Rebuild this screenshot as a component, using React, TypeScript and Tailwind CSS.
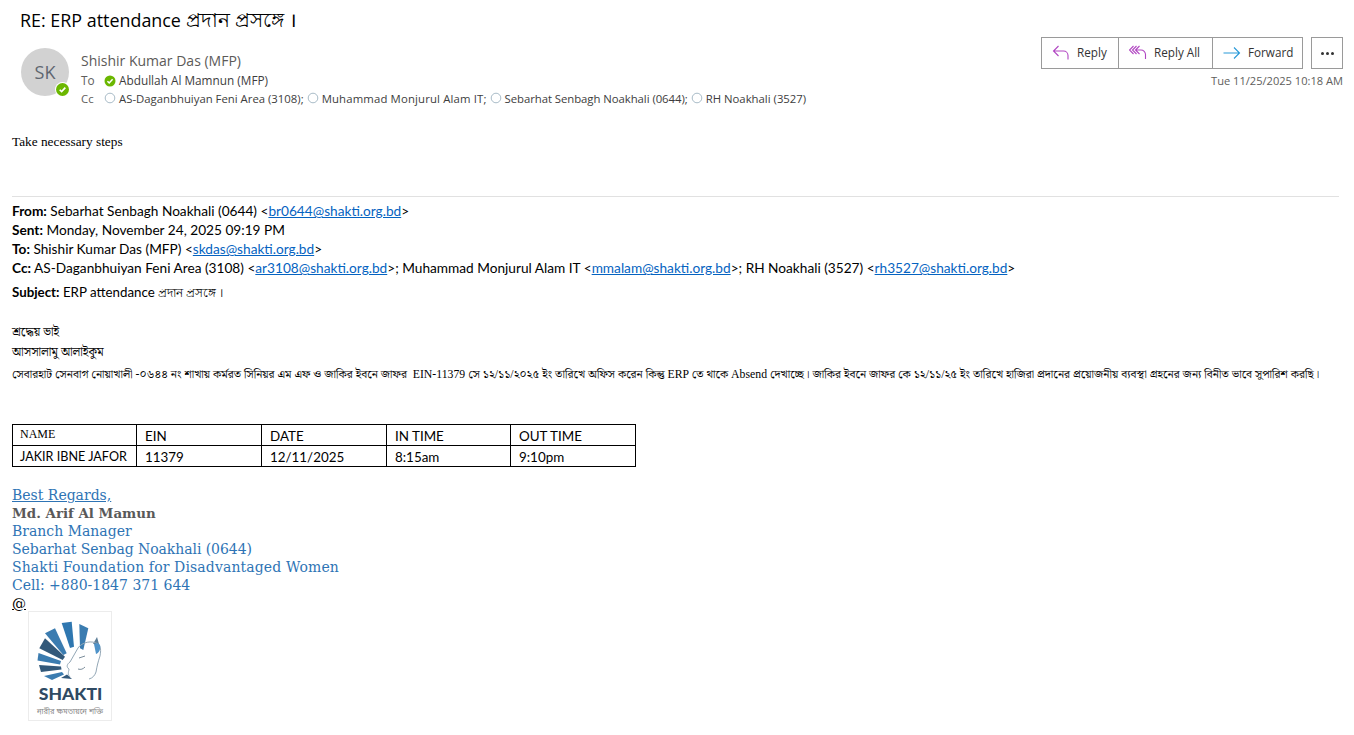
import React from "react";

const sans = "font-['Open_Sans','Noto_Sans',sans-serif]";
const body = "font-['Lato','Open_Sans',sans-serif]";
const serif = "font-['Liberation_Serif','Noto_Serif_Bengali','Noto_Sans_Bengali',serif]";

const Presence = ({ on }: { on?: boolean }) =>
  on ? (
    <svg width="12" height="12" viewBox="0 0 12 12" className="shrink-0">
      <circle cx="6" cy="6" r="5.5" fill="#6bb700" />
      <path d="M3.4 6.2l1.8 1.7 3.4-3.6" fill="none" stroke="#fff" strokeWidth="1.5" />
    </svg>
  ) : (
    <svg width="12" height="12" viewBox="0 0 12 12" className="shrink-0">
      <circle cx="6" cy="6" r="4.8" fill="none" stroke="#a9bcc8" strokeWidth="1" />
    </svg>
  );

const ReplyIcon = () => (
  <svg width="18" height="18" viewBox="0 0 18 18" fill="none" stroke="#b146c2" strokeWidth="1.1">
    <path d="M6.5 2.5L1.5 7.5l5 5M1.5 7.5h10a4.5 4.5 0 0 1 4.5 4.5v4" transform="translate(0 -.5)" />
  </svg>
);

const ReplyAllIcon = () => (
  <svg width="18" height="18" viewBox="0 0 18 18" fill="none" stroke="#b146c2" strokeWidth="1.1">
    <path d="M4.5 2L.5 6l4 4M7.5 2L3.5 6l4 4M10.5 2L6.5 6l4 4M6.5 6h5.5a4.5 4.5 0 0 1 4.5 4.5V15" />
  </svg>
);

const ForwardIcon = () => (
  <svg width="18" height="18" viewBox="0 0 18 18" fill="none" stroke="#2899d8" strokeWidth="1.1">
    <path d="M.5 9h16M11 3.5L16.5 9 11 14.5" />
  </svg>
);

const Mail = ({ to }: { to: string }) => (
  <a className="text-[#0563c1] underline">{to}</a>
);

const Recipient = ({ name, fit }: { name: string; fit?: string }) => (
  <span className="inline-flex items-center gap-[3px] mr-[3px]">
    <Presence />
    <span className={fit}>{name}</span>
  </span>
);

const Logo = () => (
  <div className="ml-4 w-[84px] h-[110px] border border-[#ececec] flex flex-col items-center">
    <svg width="84" height="75" viewBox="0 0 84 75" className="shrink-0 -mt-px">
      <g fill="#3b7cb0">
        <polygon points="33.7,12 43.7,10.7 46,35.7 42,37" fill="#2f77b0" />
        <polygon points="51.3,13 60.3,17.3 55.3,39 52,37.3" />
        <polygon points="17,22.3 27,17.3 38.7,42.3 35.3,44" />
        <polygon points="11.3,37.3 17,27.3 37,45.7 34.7,49" fill="#33597a" />
        <polygon points="10.5,42 33,50 32,53.5 9.5,49.5" />
        <polygon points="11,54 33,55.5 33.5,58.5 13,61" fill="#33597a" />
        <polygon points="16,65 34,61 36,63.5 24,69" />
        <polygon points="33,67 39,63.5 44,68" fill="#33597a" />
        <polygon points="69,26 71,33 65,33" fill="#5a7c96" />
      </g>
      <path
        d="M42 66c-3-3-1-6-1-8-3-2-2-5 1-7l8-14c4-6 14-8 20-4 3 3 3 6 2 12-2 6-3 10-4 16-1 3-3 6-7 7"
        fill="none"
        stroke="#93a7b6"
        strokeWidth="1"
      />
      <path d="M66 33c2-1 5-1 6 1 1 4-1 8-4 9z" fill="#4f93c9" />
      <path d="M51 47l6-2M50 58c3 1 5 0 7-2" fill="none" stroke="#7b8d9b" strokeWidth="1" />
    </svg>
    <span className="font-['Lato',sans-serif] font-black text-[17.5px] leading-[19px] text-[#2f4a63] -mt-[2px] ml-[1px]">
      SHAKTI
    </span>
    <span className="font-['Liberation_Sans','Noto_Sans_Bengali',sans-serif] text-[7.5px] leading-[10px] mt-[4px] text-[#888] whitespace-nowrap">
      নারীর ক্ষমতায়নে শক্তি
    </span>
  </div>
);

const cells = [
  ["NAME", "EIN", "DATE", "IN TIME", "OUT TIME"],
  ["JAKIR IBNE JAFOR", "11379", "12/11/2025", "8:15am", "9:10pm"],
];

export default function App() {
  return (
    <div className="w-[1354px] h-[735px] overflow-hidden bg-white text-black">
      {/* Subject */}
      <h1 className={`${sans} pl-[20px] pt-[7px] h-[38px] text-[17.9px] leading-[26px]`}>
        RE: ERP attendance <span className="text-[20px]">প্রদান প্রসঙ্গে ।</span>
      </h1>

      {/* Header */}
      <div className="flex justify-between pl-[21px] pr-[11px] h-[88px]">
        <div className="flex">
          <div className="relative w-[48px] h-[48px] mt-[10px] rounded-full bg-[#d2d2d2] flex items-center justify-center text-[#5f6670] text-[18px]">
            <span className={sans}>SK</span>
            <span className="absolute -right-[1px] -bottom-[1px] w-[15px] h-[15px] rounded-full bg-white flex items-center justify-center">
              <svg width="13" height="13" viewBox="0 0 12 12">
                <circle cx="6" cy="6" r="6" fill="#6bb700" />
                <path d="M3.4 6.2l1.8 1.7 3.4-3.6" fill="none" stroke="#fff" strokeWidth="1.5" />
              </svg>
            </span>
          </div>
          <div className={`${sans} ml-[12px] pt-[13px] text-[#605e5c]`}>
            <div className="text-[14px] leading-[20px] text-[#5c5a58]">Shishir Kumar Das (MFP)</div>
            <div className="flex items-center h-[18px] text-[11.8px] text-[#3d3d3d] mt-[1px]">
              <span className="w-[23px] text-[#605e5c]">To</span>
              <span className="inline-flex items-center gap-[3px]">
                <Presence on />
                Abdullah Al Mamnun (MFP)
              </span>
            </div>
            <div className="flex items-center h-[14px] mt-px text-[11.35px] text-[#3d3d3d] whitespace-nowrap">
              <span className="w-[23px] text-[#605e5c]">Cc</span>
              <Recipient name="AS-Daganbhuiyan Feni Area (3108);" />
              <Recipient name="Muhammad Monjurul Alam IT;" fit="tracking-[0.15px]" />
              <Recipient name="Sebarhat Senbagh Noakhali (0644);" fit="tracking-[-0.05px]" />
              <Recipient name="RH Noakhali (3527)" />
            </div>
          </div>
        </div>

        <div className={`${sans} flex flex-col items-end -mt-[1px]`}>
          <div className="flex gap-[8px]">
            <div className="flex h-[32px] border border-[#9a9a9a] text-[11.7px] text-[#333]">
              <button className="w-[76px] flex items-center gap-[7px] pl-[10px]">
                <ReplyIcon />
                Reply
              </button>
              <button className="w-[94px] flex items-center gap-[7px] pl-[10px] border-l border-[#9a9a9a]">
                <ReplyAllIcon />
                Reply All
              </button>
              <button className="w-[90px] flex items-center gap-[7px] pl-[10px] border-l border-[#9a9a9a]">
                <ForwardIcon />
                Forward
              </button>
            </div>
            <button className="w-[32px] h-[32px] border border-[#9a9a9a] flex items-center justify-center gap-[2px]">
              <i className="w-[3px] h-[3px] rounded-full bg-[#333]" />
              <i className="w-[3px] h-[3px] rounded-full bg-[#333]" />
              <i className="w-[3px] h-[3px] rounded-full bg-[#333]" />
            </button>
          </div>
          <div className="mt-[4px] text-[11.1px] leading-[16px] text-[#605e5c]">Tue 11/25/2025 10:18 AM</div>
        </div>
      </div>

      {/* Message body */}
      <div className="pl-[12px]">
        <p className={`${serif} text-[13.3px] leading-[16px] pt-[8px]`}>Take necessary steps</p>

        <div className={`${body} mt-[46px] mr-[15px] border-t border-[#e1e1e1] pt-[5px] text-[13.67px] leading-[19px]`}>
          <div><b>From:</b> Sebarhat Senbagh Noakhali (0644) &lt;<Mail to="br0644@shakti.org.bd" />&gt;</div>
          <div><b>Sent:</b> Monday, November 24, 2025 09:19 PM</div>
          <div><b>To:</b> Shishir Kumar Das (MFP) &lt;<Mail to="skdas@shakti.org.bd" />&gt;</div>
          <div>
            <b>Cc:</b> AS-Daganbhuiyan Feni Area (3108) &lt;<Mail to="ar3108@shakti.org.bd" />&gt;; Muhammad Monjurul Alam IT &lt;<Mail to="mmalam@shakti.org.bd" />&gt;; RH Noakhali (3527) &lt;<Mail to="rh3527@shakti.org.bd" />&gt;
          </div>
          <div className="mt-[5px] text-[13.3px]"><b>Subject:</b> ERP attendance <span className="text-[11.8px]">প্রদান প্রসঙ্গে ।</span></div>
        </div>

        <div className={`${serif} mt-[20px] text-[12.2px] whitespace-nowrap`}>
          <div className="leading-[20px]">শ্রদ্ধেয় ভাই</div>
          <div className="leading-[20px]">আসসালামু আলাইকুম</div>
          <div className="text-[11.76px] leading-[22px] pt-[2px]">
            সেবারহাট সেনবাগ নোয়াখালী -০৬৪৪ নং শাখায় কর্মরত সিনিয়র এম এফ ও জাকির ইবনে জাফর&nbsp; EIN-11379 সে ১২/১১/২০২৫ ইং তারিখে অফিস করেন কিন্তু ERP তে থাকে Absend দেখাচ্ছে। জাকির ইবনে জাফর কে ১২/১১/২৫ ইং তারিখে হাজিরা প্রদানের প্রয়োজনীয় ব্যবস্থা গ্রহনের জন্য বিনীত ভাবে সুপারিশ করছি।
          </div>
        </div>

        <table className={`${body} mt-[38px] w-[624px] table-fixed border-collapse text-[13.4px] leading-[18px]`}>
          <colgroup>
            <col className="w-[124px]" />
            <col className="w-[125px]" />
            <col className="w-[125px]" />
            <col className="w-[124px]" />
            <col className="w-[125px]" />
          </colgroup>
          <tbody>
            {cells.map((row, r) => (
              <tr key={r} className="h-[21px]">
                {row.map((c, i) => (
                  <td
                    key={c}
                    className={`border border-black align-bottom whitespace-nowrap ${i === 0 ? "pl-[7px]" : "pl-[8px]"} ${c === "NAME" ? `${serif} text-[12px] !align-top` : ""} ${c === "JAKIR IBNE JAFOR" ? "text-[12.6px]" : ""}`}
                  >
                    {c}
                  </td>
                ))}
              </tr>
            ))}
          </tbody>
        </table>

        {/* Signature */}
        <div className="mt-[19px] font-['DejaVu_Serif','Liberation_Serif',serif] text-[14px] leading-[18px] text-[#2e74b5] whitespace-nowrap">
          <div className="underline">Best Regards,</div>
          <div className="font-bold text-[13.4px] text-[#595959]">Md. Arif Al Mamun</div>
          <div>Branch Manager</div>
          <div className="tracking-[-0.06px]">Sebarhat Senbag Noakhali (0644)</div>
          <div className="tracking-[0.12px]">Shakti Foundation for Disadvantaged Women</div>
          <div>Cell: +880-1847 371 644</div>
          <div className="h-[17px] text-black underline">@</div>
        </div>
        <Logo />
      </div>
    </div>
  );
}
